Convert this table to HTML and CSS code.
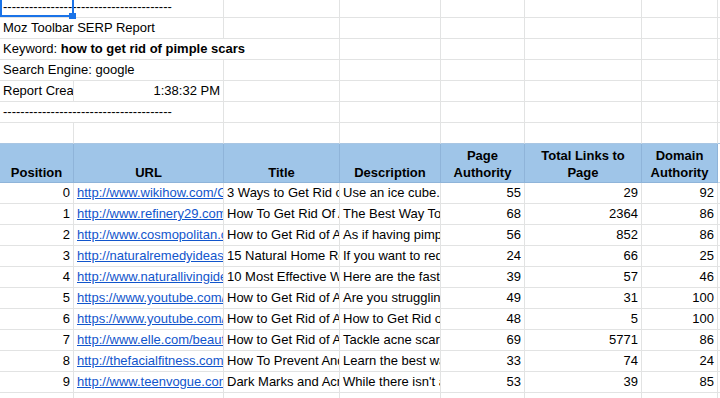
FILE: index.html
```html
<!DOCTYPE html>
<html>
<head>
<meta charset="utf-8">
<link rel="stylesheet" href="styles.css">
</head>
<body>
<div class="sheet">
  <div class="sel"><span class="handle"></span></div>

  <div class="c span2">---------------------------------------</div>
  <div class="c"></div><div class="c"></div><div class="c"></div><div class="c"></div><div class="c"></div><div class="c"></div>

  <div class="c span2">Moz Toolbar SERP Report</div>
  <div class="c"></div><div class="c"></div><div class="c"></div><div class="c"></div><div class="c"></div><div class="c"></div>

  <div class="c span3"><span>Keyword: <b>how to get rid of pimple scars</b></span></div>
  <div class="c"></div><div class="c"></div><div class="c"></div><div class="c"></div><div class="c"></div>

  <div class="c span2">Search Engine: google</div>
  <div class="c"></div><div class="c"></div><div class="c"></div><div class="c"></div><div class="c"></div><div class="c"></div>

  <div class="c">Report Created</div>
  <div class="c num">1:38:32 PM</div>
  <div class="c"></div><div class="c"></div><div class="c"></div><div class="c"></div><div class="c"></div><div class="c"></div>

  <div class="c span2">---------------------------------------</div>
  <div class="c"></div><div class="c"></div><div class="c"></div><div class="c"></div><div class="c"></div><div class="c"></div>

  <div class="c pre"></div><div class="c pre"></div><div class="c pre"></div><div class="c pre"></div><div class="c pre"></div><div class="c pre"></div><div class="c pre"></div><div class="c pre"></div>

  <div class="h">Position</div>
  <div class="h">URL</div>
  <div class="h">Title</div>
  <div class="h">Description</div>
  <div class="h">Page<br>Authority</div>
  <div class="h">Total Links to<br>Page</div>
  <div class="h">Domain<br>Authority</div>
  <div class="c hx"></div>

  <div class="c num">0</div><div class="c"><a>http://www.wikihow.com/Get-Rid-of-Pimple-Scars</a></div><div class="c">3 Ways to Get Rid of Pimple Scars</div><div class="c">Use an ice cube. Ice can help</div><div class="c num">55</div><div class="c num">29</div><div class="c num">92</div><div class="c"></div>

  <div class="c num">1</div><div class="c"><a>http://www.refinery29.com/acne-scars</a></div><div class="c">How To Get Rid Of Acne Scars</div><div class="c">The Best Way To Get Rid</div><div class="c num">68</div><div class="c num">2364</div><div class="c num">86</div><div class="c"></div>

  <div class="c num">2</div><div class="c"><a>http://www.cosmopolitan.com/style-beauty</a></div><div class="c">How to Get Rid of Acne Scars</div><div class="c">As if having pimples</div><div class="c num">56</div><div class="c num">852</div><div class="c num">86</div><div class="c"></div>

  <div class="c num">3</div><div class="c"><a>http://naturalremedyideas.com/acne-scars</a></div><div class="c">15 Natural Home Remedies</div><div class="c">If you want to reduce</div><div class="c num">24</div><div class="c num">66</div><div class="c num">25</div><div class="c"></div>

  <div class="c num">4</div><div class="c"><a>http://www.naturallivingideas.com/acne</a></div><div class="c">10 Most Effective Ways</div><div class="c">Here are the fastest</div><div class="c num">39</div><div class="c num">57</div><div class="c num">46</div><div class="c"></div>

  <div class="c num">5</div><div class="c"><a>https://www.youtube.com/watch?v=abc</a></div><div class="c">How to Get Rid of Acne Scars</div><div class="c">Are you struggling with</div><div class="c num">49</div><div class="c num">31</div><div class="c num">100</div><div class="c"></div>

  <div class="c num">6</div><div class="c"><a>https://www.youtube.com/watch?v=def</a></div><div class="c">How to Get Rid of Acne</div><div class="c">How to Get Rid of</div><div class="c num">48</div><div class="c num">5</div><div class="c num">100</div><div class="c"></div>

  <div class="c num">7</div><div class="c"><a>http://www.elle.com/beauty/makeup</a></div><div class="c">How to Get Rid of Acne Scars</div><div class="c">Tackle acne scarring</div><div class="c num">69</div><div class="c num">5771</div><div class="c num">86</div><div class="c"></div>

  <div class="c num">8</div><div class="c"><a>http://thefacialfitness.com/blog</a></div><div class="c">How To Prevent And Remove</div><div class="c">Learn the best ways</div><div class="c num">33</div><div class="c num">74</div><div class="c num">24</div><div class="c"></div>

  <div class="c num">9</div><div class="c"><a>http://www.teenvogue.com/story</a></div><div class="c">Dark Marks and Acne Scars</div><div class="c">While there isn't a</div><div class="c num">53</div><div class="c num">39</div><div class="c num">85</div><div class="c"></div>

  <div class="c"></div><div class="c"></div><div class="c"></div><div class="c"></div><div class="c"></div><div class="c"></div><div class="c"></div><div class="c"></div>
</div>
</body>
</html>
```

FILE: styles.css
```css
html, body {
  margin: 0;
  padding: 0;
  background: #fff;
  overflow: hidden;
}

.sheet {
  position: relative;
  display: grid;
  grid-template-columns: 74px 150px 116px 101px 84px 117px 76px 2px;
  grid-template-rows: 18px repeat(6, 21px) 39px repeat(11, 21px);
  font-family: "Liberation Sans", Arial, sans-serif;
  font-size: 13px;
  color: #000;
  width: 720px;
}

.c {
  box-sizing: border-box;
  border-right: 1px solid #e2e3e3;
  border-bottom: 1px solid #e2e3e3;
  padding: 0 3px 2px 3px;
  line-height: 16px;
  white-space: nowrap;
  overflow: hidden;
  display: flex;
  align-items: flex-end;
}

.span2 { grid-column: span 2; overflow: visible; }
.span3 { grid-column: span 3; overflow: visible; }

.num { justify-content: flex-end; }

.pre { border-bottom-color: #a9c6e3; }

.h {
  box-sizing: border-box;
  background: #9fc5e8;
  border-right: 1px solid #8fb4d9;
  border-bottom: 1px solid #8fb4d9;
  font-weight: bold;
  text-align: center;
  line-height: 17px;
  padding: 0 2px 1px 2px;
  display: flex;
  align-items: flex-end;
  justify-content: center;
  white-space: nowrap;
}

.hx { border-bottom-color: #c7d9ec; }

a {
  color: #1155cc;
  text-decoration: underline;
}

.sel {
  position: absolute;
  left: 0;
  top: -10px;
  width: 74px;
  height: 27px;
  box-sizing: border-box;
  border: 2px solid #1a73e8;
  z-index: 2;
  pointer-events: none;
}

.handle {
  position: absolute;
  right: -4px;
  bottom: -4px;
  width: 7px;
  height: 6px;
  background: #1a73e8;
}
```
